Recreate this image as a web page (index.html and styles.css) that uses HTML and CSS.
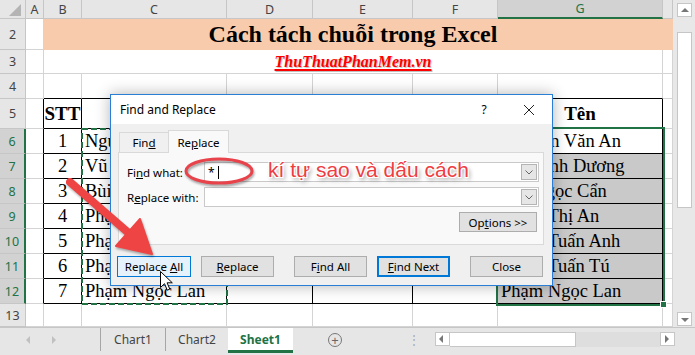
FILE: index.html
```html
<!DOCTYPE html>
<html lang="vi">
<head>
    <meta charset="UTF-8">
    <meta name="viewport" content="width=device-width, initial-scale=1.0">
    <title>Cách tách chuỗi trong Excel</title>
    <link rel="stylesheet" href="styles.css">
</head>
<body>
<div class="app">
    <div class="workspace">
        <div class="grid" id="sheet">
            <!-- copy marquee around C6:C12 -->
            <svg class="ants" width="147" height="177"><rect x="1" y="1" width="145" height="175"/></svg>
            <!-- selected range G6:G12 -->
            <div class="selection"><span class="fill-handle"></span></div>
        </div>
        <div class="vscroll">
            <span class="sb-btn sb-up"></span>
            <span class="sb-thumb"></span>
            <span class="sb-btn sb-down"></span>
        </div>
    </div>

    <div class="tabbar">
        <div class="tab-nav">
            <span class="nav-arrow nav-left"></span>
            <span class="nav-arrow nav-right"></span>
        </div>
        <div class="tab">Chart1</div>
        <div class="tab">Chart2</div>
        <div class="tab active">Sheet1</div>
        <div class="tab-add"><span class="add-circle">+</span></div>
        <div class="tab-split">⋮</div>
        <div class="hscroll">
            <span class="sb-btn sb-left"></span>
            <span class="h-thumb"></span>
            <span class="h-track"></span>
            <span class="sb-btn sb-right"></span>
        </div>
    </div>

    <!-- Find and Replace dialog -->
    <div class="dialog">
        <div class="dlg-title">
            <span class="dlg-caption">Find and Replace</span>
            <span class="dlg-help">?</span>
            <svg class="dlg-close" width="12" height="12" viewBox="0 0 12 12"><path d="M1 1L11 11M11 1L1 11"/></svg>
        </div>
        <div class="dlg-body">
            <div class="dlg-tabs">
                <span class="dlg-tab">Fin<u>d</u></span>
                <span class="dlg-tab active">Re<u>p</u>lace</span>
            </div>
            <div class="dlg-panel">
                <div class="field">
                    <span class="field-label">Fi<u>n</u>d what:</span>
                    <div class="combo">
                        <span class="combo-text">*<i class="caret"></i></span>
                        <span class="combo-btn"><svg width="8" height="5" viewBox="0 0 8 5"><path d="M0.5 0.5L4 4L7.5 0.5"/></svg></span>
                    </div>
                </div>
                <div class="field">
                    <span class="field-label">R<u>e</u>place with:</span>
                    <div class="combo">
                        <span class="combo-text"></span>
                        <span class="combo-btn"><svg width="8" height="5" viewBox="0 0 8 5"><path d="M0.5 0.5L4 4L7.5 0.5"/></svg></span>
                    </div>
                </div>
                <div class="panel-foot">
                    <button class="btn btn-options">Op<u>t</u>ions &gt;&gt;</button>
                </div>
            </div>
            <div class="dlg-buttons">
                <button class="btn btn-hover">Replace <u>A</u>ll</button>
                <button class="btn"><u>R</u>eplace</button>
                <button class="btn wide-gap">F<u>i</u>nd All</button>
                <button class="btn btn-default"><u>F</u>ind Next</button>
                <button class="btn wide-gap">Close</button>
            </div>
        </div>
    </div>

    <!-- annotations drawn over the screenshot -->
    <svg class="marks" width="695" height="355" viewBox="0 0 695 355">
        <ellipse class="ring" cx="219" cy="171" rx="33" ry="12"/>
        <g class="arrow">
            <line x1="70" y1="182" x2="131" y2="235"/>
            <polygon points="152,254 140,219 116,246"/>
        </g>
    </svg>
    <div class="note">kí tự sao và dấu cách</div>
    <svg class="cursor" width="14" height="21" viewBox="0 0 14 21">
        <path d="M0.5 0.5V16.5L4.5 12.7L7.3 19.2L9.8 18.1L7.1 11.8H12.3Z"/>
    </svg>
</div>

<script>
document.addEventListener("DOMContentLoaded", function() {
    buildSheet();
});

var letters = ['A', 'B', 'C', 'D', 'E', 'F', 'G', 'H'];
var names = ['Nguyễn Văn An', 'Vũ Minh Dương', 'Bùi Ngọc Cẩn', 'Phạm Thị An',
             'Phạm Tuấn Anh', 'Phạm Tuấn Tú', 'Phạm Ngọc Lan'];

function makeCell(cls, text) {
    var div = document.createElement('div');
    div.className = 'cell ' + cls;
    if (text) {
        var span = document.createElement('span');
        span.textContent = text;
        div.appendChild(span);
    }
    return div;
}

function buildSheet() {
    var sheet = document.getElementById('sheet');

    // column headers (H is cut off by the scroll bar)
    sheet.appendChild(makeCell('corner'));
    letters.forEach(function(l) {
        sheet.appendChild(makeCell('ch' + (l === 'G' ? ' hsel' : ''), l === 'H' ? '' : l));
    });

    for (var r = 2; r <= 13; r++) {
        var selRow = r >= 6 && r <= 12;
        sheet.appendChild(makeCell('rh' + (selRow ? ' hsel' : ''), String(r)));

        if (r === 2) {
            sheet.appendChild(makeCell(''));
            sheet.appendChild(makeCell('title', 'Cách tách chuỗi trong Excel'));
            sheet.appendChild(makeCell('peach'));
            continue;
        }
        if (r === 3) {
            sheet.appendChild(makeCell(''));
            sheet.appendChild(makeCell('brand', 'ThuThuatPhanMem.vn'));
            sheet.appendChild(makeCell(''));
            continue;
        }

        letters.forEach(function(l, c) {
            var inTable = r >= 5 && r <= 12 && c >= 1 && c <= 6;
            var cls = [];
            var text = '';
            if (inTable) cls.push('tb');
            if (r === 4 && c >= 1 && c <= 6) cls.push('tb-top');
            if (c === 0 && r >= 5 && r <= 12) cls.push('tb-left');

            if (r === 5) {
                cls.push('head');
                if (l === 'B') text = 'STT';
                if (l === 'G') text = 'Tên';
            } else if (r >= 6 && r <= 12) {
                if (l === 'B') { text = String(r - 5); cls.push('num'); }
                if (l === 'C') { text = names[r - 6]; cls.push('name'); }
                if (l === 'G') {
                    text = names[r - 6];
                    cls.push('name');
                    if (r > 6) cls.push('shaded');
                }
            }
            sheet.appendChild(makeCell(cls.join(' '), text));
        });
    }
}
</script>
</body>
</html>
```

FILE: styles.css
```css
/* General styles */
body {
    margin: 0;
    padding: 0;
    font-family: "Noto Sans", Arial, sans-serif;
    background-color: #ffffff;
}

.app {
    position: relative;
    width: 695px;
    height: 355px;
    overflow: hidden;
}

/* Worksheet */
.workspace {
    display: flex;
    height: 327px;
}

.grid {
    position: relative;
    display: grid;
    grid-template-columns: 26px 18px 38px 145px 86px 100px 85px 165px 10px;
    grid-template-rows: 19px 31px 24px 25px 30px repeat(7, 25px) 23px;
    width: 673px;
    overflow: hidden;
}

.cell {
    box-sizing: border-box;
    display: flex;
    align-items: center;
    border-right: 1px solid #d4d4d4;
    border-bottom: 1px solid #d4d4d4;
    font-family: "Liberation Serif", "Times New Roman", serif;
    font-size: 18.5px;
    color: #000;
    white-space: nowrap;
    overflow: hidden;
}

/* Headers */
.ch, .rh, .corner {
    justify-content: center;
    background-color: #e6e6e6;
    border-right-color: #c6c6c6;
    border-bottom-color: #c6c6c6;
    font-family: "Noto Sans", Arial, sans-serif;
    font-size: 12.5px;
    color: #444;
}

.ch.hsel {
    background-color: #d2d2d2;
    color: #217346;
    border-bottom: 2px solid #217346;
}

.rh.hsel {
    background-color: #d2d2d2;
    color: #217346;
    border-right: 2px solid #217346;
}

.corner {
    position: relative;
}

.corner::after {
    content: "";
    position: absolute;
    right: 4px;
    bottom: 2px;
    width: 12px;
    height: 12px;
    background-color: #b4b4b4;
    clip-path: polygon(100% 0, 100% 100%, 0 100%);
}

/* Title rows */
.title {
    grid-column: span 6;
    justify-content: center;
    background-color: #f8cbad;
    border-color: #f8cbad;
    font-size: 24px;
    font-weight: bold;
}

.peach {
    background-color: #f8cbad;
    border-color: #f8cbad;
}

.brand {
    grid-column: span 6;
    justify-content: center;
}

.brand span {
    color: #ff0000;
    font-size: 16px;
    font-weight: bold;
    font-style: italic;
    text-decoration: underline;
    text-decoration-thickness: 2px;
    text-underline-offset: 2px;
    text-shadow: 1px 1px 1px rgba(0, 0, 0, 0.25);
}

/* Table borders */
.tb {
    border-right-color: #000;
    border-bottom-color: #000;
}

.tb-top {
    border-bottom-color: #000;
}

.tb-left {
    border-right-color: #000;
}

.head {
    justify-content: center;
    font-size: 19px;
    font-weight: bold;
}

.num {
    justify-content: center;
}

.name {
    padding-left: 3px;
}

.shaded {
    background-color: #c9c9c9;
}

/* Selection overlays */
.ants {
    position: absolute;
    left: 81px;
    top: 128px;
}

.ants rect {
    fill: none;
    stroke: #217346;
    stroke-width: 2;
    stroke-dasharray: 6 3;
}

.selection {
    position: absolute;
    left: 496px;
    top: 127px;
    width: 169px;
    height: 179px;
    box-sizing: border-box;
    border: 2px solid #217346;
}

.fill-handle {
    position: absolute;
    right: -4px;
    bottom: -4px;
    width: 5px;
    height: 5px;
    background-color: #217346;
    border: 1px solid #fff;
}

/* Scroll bars */
.vscroll {
    display: flex;
    flex-direction: column;
    align-items: center;
    width: 22px;
    padding: 3px 0 1px 1px;
    box-sizing: border-box;
    background-color: #e8e8e8;
}

.sb-btn {
    position: relative;
    box-sizing: border-box;
    width: 15px;
    height: 14px;
    background-color: #fff;
    border: 1px solid #c6c6c6;
}

.sb-btn::after {
    content: "";
    position: absolute;
    left: 3px;
    top: 4px;
    border: 4px solid transparent;
}

.sb-up::after {
    top: 0px;
    border-bottom-color: #777;
}

.sb-down::after {
    top: 5px;
    border-top-color: #777;
}

.sb-left::after {
    left: -1px;
    top: 2px;
    border-right-color: #777;
}

.sb-right::after {
    left: 4px;
    top: 2px;
    border-left-color: #777;
}

.sb-thumb {
    box-sizing: border-box;
    width: 15px;
    height: 176px;
    margin-top: 15px;
    background-color: #fff;
    border: 1px solid #c6c6c6;
}

.sb-down {
    margin-top: auto;
}

/* Sheet tabs */
.tabbar {
    display: flex;
    height: 28px;
    box-sizing: border-box;
    background-color: #e6e6e6;
    border-top: 1px solid #c6c6c6;
    font-size: 12px;
    color: #444;
}

.tab-nav {
    display: flex;
    align-items: center;
    width: 100px;
    height: 24px;
}

.nav-arrow {
    width: 0;
    height: 0;
    border: 4px solid transparent;
}

.nav-left {
    margin-left: 22px;
    border-right-color: #c0c0c0;
}

.nav-right {
    margin-left: 22px;
    border-left-color: #c0c0c0;
}

.tab {
    display: flex;
    align-items: center;
    justify-content: center;
    width: 65px;
    height: 23px;
    box-sizing: border-box;
    border-left: 1px solid #a6a6a6;
}

.tab + .tab {
    width: 63px;
}

.tab.active {
    width: 65px;
    height: 25px;
    background-color: #fff;
    border-left: none;
    border-bottom: 3px solid #217346;
    color: #217346;
    font-weight: bold;
}

.tab-add {
    display: flex;
    align-items: center;
    justify-content: center;
    width: 84px;
    height: 24px;
}

.add-circle {
    display: flex;
    align-items: center;
    justify-content: center;
    width: 12px;
    height: 12px;
    border: 1px solid #777;
    border-radius: 50%;
    font-size: 13px;
    line-height: 1;
    color: #666;
}

.tab-split {
    width: 58px;
    height: 24px;
    line-height: 24px;
    padding-right: 15px;
    box-sizing: border-box;
    text-align: right;
    color: #aaa;
}

.hscroll {
    display: flex;
    width: 240px;
    height: 15px;
    margin-top: 4px;
}

.h-thumb {
    box-sizing: border-box;
    width: 126px;
    background-color: #fff;
    border: 1px solid #c6c6c6;
    border-left: none;
}

.h-track {
    flex: 1;
    background-color: #dedede;
}

/* Dialog */
.dialog {
    position: absolute;
    left: 110px;
    top: 94px;
    width: 443px;
    height: 192px;
    box-sizing: border-box;
    background-color: #f0f0f0;
    border: 1px solid #2b7ed6;
    box-shadow: 0 0 14px rgba(0, 0, 0, 0.3);
    font-size: 11.5px;
    color: #000;
}

.dlg-title {
    display: flex;
    align-items: center;
    height: 29px;
    padding-left: 9px;
    background-color: #fff;
}

.dlg-caption {
    flex: 1;
    font-size: 12px;
}

.dlg-help {
    width: 16px;
    text-align: center;
    font-size: 12px;
}

.dlg-close {
    margin-left: 31px;
    margin-right: 17px;
}

.dlg-close path {
    stroke: #222;
    stroke-width: 1;
    fill: none;
}

.dlg-body {
    padding: 6px 8px 0 7px;
}

.dlg-tabs {
    display: flex;
    height: 22px;
    padding-left: 1px;
}

.dlg-tab {
    display: flex;
    align-items: center;
    justify-content: center;
    box-sizing: border-box;
    width: 50px;
    margin-top: 2px;
    border: 1px solid #d9d9d9;
    border-bottom: none;
}

.dlg-tab.active {
    width: 61px;
    height: 23px;
    margin-top: 0;
    margin-left: -1px;
    background-color: #f9f9f9;
    position: relative;
    z-index: 1;
}

.dlg-panel {
    box-sizing: border-box;
    height: 93px;
    padding: 9px 4px 0 8px;
    background-color: #f9f9f9;
    border: 1px solid #d9d9d9;
}

.field {
    display: flex;
    align-items: center;
    height: 20px;
    margin-bottom: 5px;
}

.field-label {
    width: 77px;
}

.combo {
    flex: 1;
    display: flex;
    height: 20px;
    box-sizing: border-box;
    background-color: #fff;
    border: 1px solid #c9c9c9;
}

.combo-text {
    flex: 1;
    display: flex;
    align-items: center;
    padding-left: 3px;
    font-size: 12px;
}

.caret {
    display: inline-block;
    width: 1px;
    height: 13px;
    margin-left: 3px;
    background-color: #000;
}

.combo-btn {
    display: flex;
    align-items: center;
    justify-content: center;
    width: 16px;
    box-sizing: border-box;
    margin: 1px;
    background-color: #e6e6e6;
    border: 1px solid #b4b4b4;
}

.combo-btn path {
    fill: none;
    stroke: #666;
    stroke-width: 1;
}

.panel-foot {
    display: flex;
    justify-content: flex-end;
    padding-right: 2px;
}

.btn {
    box-sizing: border-box;
    width: 73px;
    height: 21px;
    padding: 0;
    background-color: #e1e1e1;
    border: 1px solid #adadad;
    font-family: "Noto Sans", Arial, sans-serif;
    font-size: 11.5px;
    color: #000;
}

.btn-options {
    width: 78px;
    height: 20px;
}

.dlg-buttons {
    display: flex;
    margin-top: 11px;
    margin-left: -1px;
}

.dlg-buttons .btn + .btn {
    margin-left: 10px;
}

.dlg-buttons .btn.wide-gap {
    margin-left: 20px;
}

.btn-hover {
    width: 74px;
    background-color: #e5f1fb;
    border-color: #0078d7;
}

.btn-default {
    border: 2px solid #0078d7;
}

/* Annotations */
.marks {
    position: absolute;
    left: 0;
    top: 0;
    pointer-events: none;
}

.ring {
    fill: none;
    stroke: #e8424a;
    stroke-width: 3;
    filter: drop-shadow(1px 2px 1px rgba(0, 0, 0, 0.35));
}

.arrow {
    filter: drop-shadow(1px 2px 1px rgba(0, 0, 0, 0.3));
}

.arrow line {
    stroke: #ee4444;
    stroke-width: 8;
    stroke-linecap: round;
}

.arrow polygon {
    fill: #ee4444;
    stroke: #ee4444;
    stroke-width: 2;
    stroke-linejoin: round;
}

.note {
    position: absolute;
    left: 268px;
    top: 157px;
    font-family: "Liberation Sans", Arial, sans-serif;
    font-size: 21px;
    line-height: 26px;
    color: #ee3d43;
    text-shadow: 1px 1px 0 #fff, -1px -1px 0 #fff, 1px -1px 0 #fff, -1px 1px 0 #fff, 2px 3px 4px rgba(0, 0, 0, 0.45);
    white-space: nowrap;
}

.cursor {
    position: absolute;
    left: 160px;
    top: 271px;
}

.cursor path {
    fill: #fff;
    stroke: #000;
    stroke-width: 1;
}
```
